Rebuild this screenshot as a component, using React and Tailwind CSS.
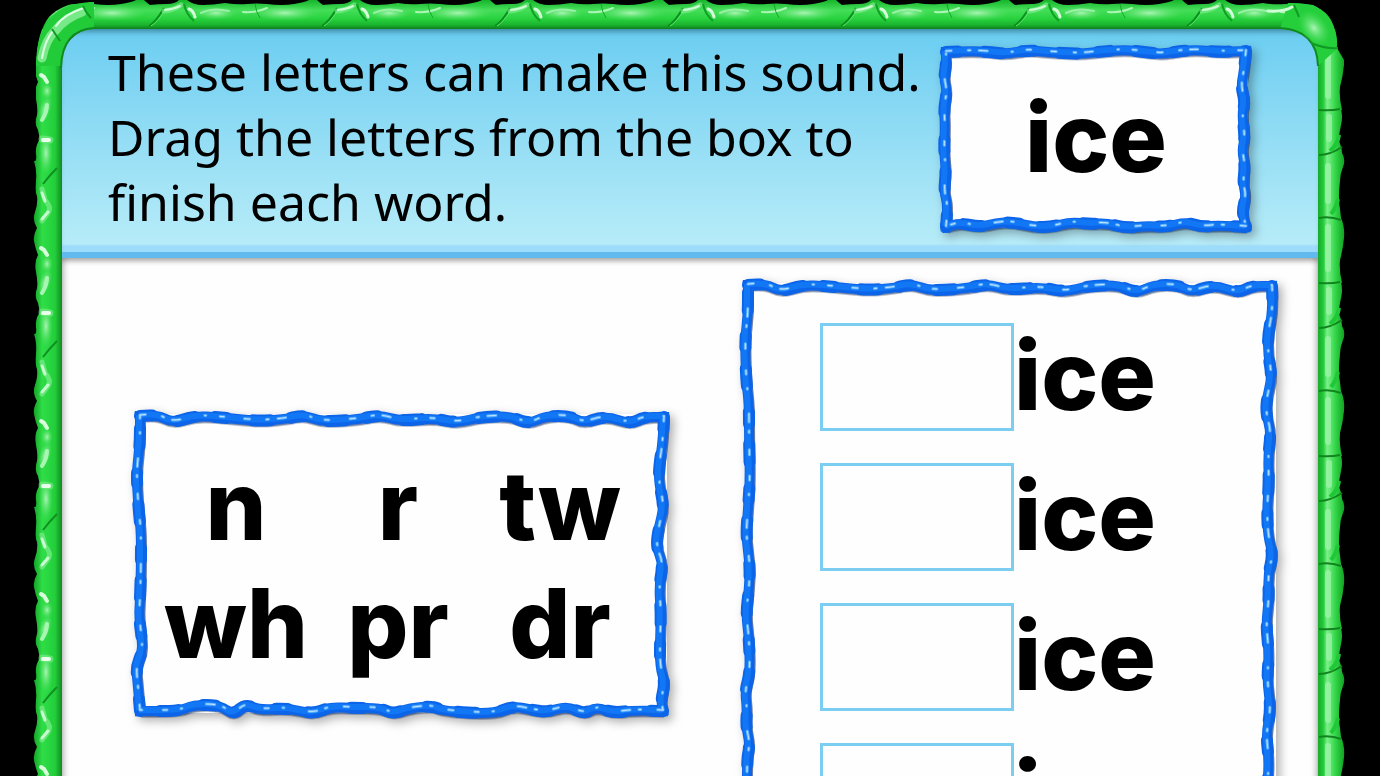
import { useState } from 'react';

const LETTERS = ['n', 'r', 'tw', 'wh', 'pr', 'dr'];
const ROWS = [1, 2, 3, 4];

// Rope centre lines, listed edge by edge
const CARD_ROPE = {
  width: 312,
  height: 186,
  top: [[6, 6], [30, 5], [50, 6], [66, 8], [88, 4], [106, 6], [140, 8], [165, 5], [188, 4], [204, 6], [222, 8], [240, 5], [258, 4], [280, 6], [306, 5]],
  right: [[306, 5], [304, 25], [301, 40], [305, 56], [302, 68], [305, 92], [302, 104], [305, 120], [303, 138], [306, 150], [302, 166], [306, 181]],
  bottom: [[306, 181], [280, 179], [262, 181], [246, 176], [226, 181], [206, 180], [186, 182], [166, 177], [150, 178], [130, 176], [112, 181], [94, 181], [72, 176], [56, 177], [40, 181], [20, 177], [6, 181]],
  left: [[6, 181], [8, 160], [4, 146], [6, 125], [4, 105], [5, 80], [4, 62], [7, 46], [4, 32], [6, 20], [6, 6]],
};

const LONG_TOP = [[6, 6], [22, 4], [39, 13], [60, 6], [83, 7], [103, 9], [126, 11], [152, 9], [169, 5], [186, 11], [203, 11], [226, 9], [246, 5], [266, 11], [299, 8], [323, 13], [346, 7], [376, 6], [394, 14], [412, 6], [436, 6], [449, 13], [472, 6], [496, 14], [510, 7], [530, 7]];

const LETTERS_ROPE = {
  width: 537,
  height: 307,
  top: LONG_TOP,
  right: [[530, 7], [529, 30], [525, 57], [525, 73], [530, 97], [525, 116], [522, 137], [529, 153], [525, 177], [527, 203], [526, 230], [526, 257], [531, 273], [527, 290], [529, 301]],
  bottom: [[529, 301], [500, 300], [480, 303], [462, 297], [450, 304], [433, 296], [413, 302], [399, 300], [379, 296], [359, 304], [309, 301], [299, 296], [276, 298], [259, 304], [246, 298], [219, 298], [196, 297], [179, 304], [153, 298], [126, 300], [111, 294], [99, 305], [86, 295], [59, 295], [46, 301], [6, 301]],
  left: [[6, 301], [4, 277], [2, 257], [8, 243], [8, 230], [5, 207], [6, 190], [7, 157], [7, 123], [5, 103], [3, 77], [3, 57], [6, 33], [6, 6]],
};

const WORDS_ROPE = {
  width: 538,
  height: 600,
  top: LONG_TOP,
  right: [[530, 7], [531, 30], [526, 55], [526, 75], [530, 98], [525, 118], [524, 135], [529, 153], [526, 178], [527, 203], [525, 230], [526, 257], [531, 276], [526, 296], [527, 320], [524, 345], [527, 375], [525, 402], [529, 430], [524, 455], [527, 482], [525, 512], [527, 600]],
  bottom: [],
  left: [[5, 600], [4, 485], [8, 466], [4, 448], [5, 430], [3, 412], [8, 394], [7, 360], [4, 335], [7, 310], [8, 287], [4, 257], [6, 230], [8, 200], [7, 160], [7, 125], [4, 100], [3, 60], [6, 35], [6, 6]],
};

const smooth = (points) => {
  if (points.length === 0) return '';
  let d = `M${points[0][0]} ${points[0][1]}`;
  for (let i = 1; i < points.length - 1; i++) {
    const [x, y] = points[i];
    const [nx, ny] = points[i + 1];
    d += ` Q${x} ${y} ${(x + nx) / 2} ${(y + ny) / 2}`;
  }
  const last = points[points.length - 1];
  return `${d} L${last[0]} ${last[1]}`;
};

const RopeBorder = ({ rope }) => {
  const edges = [rope.top, rope.right, rope.bottom, rope.left].map(smooth).join(' ');
  return (
    <svg
      className="pointer-events-none absolute inset-0 h-full w-full overflow-visible"
      viewBox={`0 0 ${rope.width} ${rope.height}`}
      preserveAspectRatio="none"
      fill="none"
      aria-hidden="true"
    >
      <path d={edges} stroke="#1b2f58" strokeOpacity="0.3" strokeWidth="10" transform="translate(1 2)" />
      <path d={edges} stroke="#1d3f85" strokeOpacity="0.5" strokeWidth="10" transform="translate(1 1)" />
      <path d={edges} stroke="#0c64e8" strokeWidth="10" strokeLinecap="square" />
      <path d={edges} stroke="#0c64e8" strokeWidth="12" strokeLinecap="round" strokeDasharray="12 26 18 20" />
      <path d={edges} stroke="#1277f5" strokeWidth="6" transform="translate(-1 -1)" />
      <path d={edges} stroke="#5db0ff" strokeWidth="3" strokeLinecap="round" strokeDasharray="5 17 2 9 8 25 1 14 4 21" transform="translate(0 -1)" />
      <path d={edges} stroke="#c4e6ff" strokeWidth="1" strokeLinecap="round" strokeDasharray="5 17 2 9 8 25 1 14 4 21" transform="translate(0 -1)" />
    </svg>
  );
};

const Panel = ({ rope, className, children }) => (
  <section className={`relative bg-[#fefefe] bg-clip-content p-1 drop-shadow-[4px_4px_5px_rgba(0,0,0,0.3)] ${className}`}>
    {children}
    <RopeBorder rope={rope} />
  </section>
);

// Bamboo frame round the whole board, built from repeated segments
const VineFrame = () => (
  <svg
    className="pointer-events-none absolute inset-0 h-full w-full"
    viewBox="0 0 1380 776"
    preserveAspectRatio="none"
    fill="none"
    aria-hidden="true"
  >
    <defs>
      <linearGradient id="vine-left" x1="0" x2="1" y1="0" y2="0">
        <stop offset="0" stopColor="#14a528" />
        <stop offset="0.3" stopColor="#2fdd47" />
        <stop offset="0.75" stopColor="#22cf3a" />
        <stop offset="1" stopColor="#128a20" />
      </linearGradient>
      <linearGradient id="vine-right" x1="0" x2="1" y1="0" y2="0">
        <stop offset="0" stopColor="#18a92b" />
        <stop offset="0.2" stopColor="#22cb39" />
        <stop offset="0.35" stopColor="#7ef08c" />
        <stop offset="0.65" stopColor="#35d74a" />
        <stop offset="1" stopColor="#0fa322" />
      </linearGradient>
      <linearGradient id="vine-top" x1="0" x2="0" y1="0" y2="1">
        <stop offset="0" stopColor="#16b52b" />
        <stop offset="0.35" stopColor="#45de59" />
        <stop offset="0.65" stopColor="#27d23e" />
        <stop offset="0.85" stopColor="#1bb52f" />
        <stop offset="1" stopColor="#0e7f1c" />
      </linearGradient>
      <radialGradient id="vine-shine">
        <stop offset="0" stopColor="#a9f5b3" />
        <stop offset="1" stopColor="#4ee261" stopOpacity="0" />
      </radialGradient>
      <g id="vine-top-part">
        <path
          d="M0 29V5Q10 4 18 4T30 0H38Q44 5 54 5T76 3Q88 5 98 4T118 4Q133 6 145 4T160 0H168Q171 3 174 5V29Z"
          fill="url(#vine-top)"
        />
        <path d="M0 26Q7 22 15 8" stroke="#0b8f1d" strokeWidth="2" />
        <path d="M2 26Q9 22 17 8" stroke="#58e66c" strokeWidth="1" />
        <ellipse cx="136" cy="13" rx="34" ry="8" fill="url(#vine-shine)" />
        <ellipse cx="67" cy="13" rx="22" ry="7" fill="url(#vine-shine)" />
        <path d="M15 11Q25 10 32 5" stroke="#86f094" strokeWidth="5" strokeLinecap="round" strokeOpacity="0.6" />
        <path d="M16 10Q25 9 31 6" stroke="#ccfad2" strokeWidth="2" strokeLinecap="round" />
        <path d="M35 4Q37 14 45 21" stroke="#129f25" strokeWidth="2" />
        <path d="M40 9Q44 10 46 17" stroke="#d5fdda" strokeWidth="3" strokeLinecap="round" />
        <path d="M52 13Q64 7 80 11" stroke="#b4f7bd" strokeOpacity="0.7" strokeWidth="2" strokeLinecap="round" />
        <path d="M94 12Q107 13 118 8" stroke="#c6fbcd" strokeOpacity="0.8" strokeWidth="2" strokeLinecap="round" />
        <path d="M106 4Q107 12 111 18" stroke="#15a829" strokeWidth="1" />
      </g>
      <g id="vine-left-part">
        <path
          d="M62 0H40Q35 7 36 15T34 22Q37 31 36 42T37 57Q38 65 35 73T37 89Q33 96 34 102T38 116Q34 123 36 133T37 149Q34 158 38 164L40 174H62Z"
          fill="url(#vine-left)"
        />
        <ellipse cx="46" cy="14" rx="7" ry="22" fill="url(#vine-shine)" />
        <path d="M42 0L50 1" stroke="#7cee8b" strokeWidth="7" strokeLinecap="round" strokeOpacity="0.6" />
        <path d="M43 1H49" stroke="#e9ffeb" strokeWidth="4" strokeLinecap="round" />
        <path d="M43 45Q49 37 57 29" stroke="#118f22" strokeWidth="2" />
        <path d="M42 50L45 61Q52 68 48 74L42 82" stroke="#7bed8a" strokeWidth="5" strokeLinecap="round" strokeOpacity="0.7" />
        <path d="M42 54L45 62M48 73L42 80" stroke="#c9fbd0" strokeWidth="3" strokeLinecap="round" />
        <path d="M41 109L44 111L47 116" stroke="#d8fedc" strokeWidth="4" strokeLinecap="round" />
        <ellipse cx="45" cy="143" rx="6" ry="15" fill="url(#vine-shine)" transform="rotate(18 45 143)" />
        <path d="M47 139Q47 146 42 154" stroke="#a9f5b3" strokeWidth="4" strokeLinecap="round" />
        <ellipse cx="47" cy="125" rx="6" ry="9" fill="url(#vine-shine)" />
      </g>
      <g id="vine-right-part">
        <path
          d="M1318 0H1341Q1343 8 1341 16T1339 32Q1342 39 1342 44Q1346 51 1343 58T1340 72Q1338 90 1340 100L1341 109Q1345 118 1344 129T1340 151Q1339 162 1342 174H1318Z"
          fill="url(#vine-right)"
        />
        <path d="M1319 1Q1331 2 1340 0M1319 46Q1330 46 1342 38M1319 109Q1330 107 1341 111" stroke="#12841f" strokeWidth="2" />
        <path d="M1329 8V30M1328 57V92M1328 118V160" stroke="#a2f4ad" strokeOpacity="0.7" strokeWidth="6" strokeLinecap="round" />
        <path d="M1330 42Q1338 35 1339 26M1331 105Q1336 99 1338 90" stroke="#20c837" strokeWidth="4" />
      </g>
    </defs>

    <use href="#vine-left-part" y="-34" />
    <use href="#vine-left-part" y="139" />
    <use href="#vine-left-part" y="312" />
    <use href="#vine-left-part" y="485" />
    <use href="#vine-left-part" y="658" />
    <use href="#vine-right-part" y="-64" />
    <use href="#vine-right-part" y="109" />
    <use href="#vine-right-part" y="282" />
    <use href="#vine-right-part" y="455" />
    <use href="#vine-right-part" y="628" />
    <use href="#vine-top-part" x="-24" />
    <use href="#vine-top-part" x="149" />
    <use href="#vine-top-part" x="322" />
    <use href="#vine-top-part" x="495" />
    <use href="#vine-top-part" x="668" />
    <use href="#vine-top-part" x="841" />
    <use href="#vine-top-part" x="1014" />
    <use href="#vine-top-part" x="1187" />

    {/* corners */}
    <path d="M0 0H92Q62 3 49 17Q37 32 36 64V100H0ZM1380 0H1296Q1321 4 1331 21Q1338 32 1337 48L1344 60V100H1380Z" fill="#000" />
    <path d="M36 64Q37 34 49 19Q63 4 90 2H94V29Q62 31 61 66H36Z" fill="#22cc39" />
    <path d="M94 28Q62 30 61 68" stroke="#128a20" strokeWidth="2" />
    <path d="M42 58Q46 39 55 31Q65 18 82 12" stroke="#8ff09c" strokeOpacity="0.8" strokeWidth="9" strokeLinecap="round" />
    <path d="M42 58Q45 40 53 31M56 26Q64 14 84 8" stroke="#dcffe1" strokeWidth="2" strokeLinecap="round" />
    <path d="M52 29L60 41M83 6Q86 13 91 18" stroke="#129b24" strokeWidth="2" />
    <path d="M1288 3Q1321 2 1331 20Q1337 32 1337 49L1318 66Q1317 31 1280 29Z" fill="#24cf3b" />
    <path d="M1280 28Q1317 30 1318 66" stroke="#128a20" strokeWidth="2" />
    <ellipse cx="1314" cy="28" rx="13" ry="20" fill="url(#vine-shine)" transform="rotate(-38 1314 28)" />
    <path d="M1294 5L1299 17M1311 43Q1325 49 1338 48" stroke="#129b24" strokeWidth="2" />
    <path d="M1268 11Q1284 12 1292 7" stroke="#d0fcd6" strokeWidth="3" strokeLinecap="round" />
  </svg>
);

const WordRow = ({ number, value, onChange }) => (
  <li>
    <label className="flex h-[108px] items-center">
      <input
        type="text"
        value={value}
        onChange={(e) => onChange(e.target.value)}
        aria-label={`Beginning letters for word ${number}`}
        className="h-[108px] w-[194px] border-3 border-[#7bcdf2] bg-transparent text-center outline-none"
      />
      <span className="pb-1">ice</span>
    </label>
  </li>
);

const App = () => {
  const [answers, setAnswers] = useState({});

  return (
    <div className="relative h-screen overflow-hidden bg-black px-[61px] pt-7 font-['Inter',sans-serif] text-black">
      <main className="h-screen overflow-hidden rounded-t-[36px] bg-[#fefefe] shadow-[inset_0_0_8px_rgba(0,0,0,0.6)]">
        <header className="flex h-[230px] items-start justify-between border-b-6 border-[#62b9ed] bg-linear-to-b from-[#6acdf1] to-[#b9edf8] pr-[67px] pl-[47px] shadow-[inset_0_6px_6px_-3px_rgba(20,70,90,0.6),inset_0_-8px_2px_-1px_#9edcfb,0_3px_5px_rgba(0,0,0,0.35)]">
          <h1 className="pt-3 font-['Noto_Sans',sans-serif] text-[50px] leading-[65px] whitespace-nowrap">
            These letters can make this sound.
            <br />
            Drag the letters from the box to
            <br />
            finish each word.
          </h1>
          <Panel rope={CARD_ROPE} className="mt-[18px] flex h-[186px] w-[312px] shrink-0 items-center justify-center">
            <p className="pb-1 text-[96px] leading-none font-extrabold">ice</p>
          </Panel>
        </header>

        <div className="flex items-start justify-between pt-[21px] pr-[39px] pl-[73px]">
          <Panel rope={LETTERS_ROPE} className="mt-[131px] h-[307px] w-[537px] shrink-0">
            <div className="grid w-[520px] grid-cols-3 px-[17px] pt-8">
              {LETTERS.map((letters) => (
                <button
                  key={letters}
                  type="button"
                  draggable
                  className="h-[118px] cursor-grab text-[96px] leading-[118px] font-extrabold"
                >
                  {letters}
                </button>
              ))}
            </div>
          </Panel>

          <Panel rope={WORDS_ROPE} className="h-[600px] w-[538px] shrink-0">
            <ul className="flex flex-col gap-8 pt-10 pl-[74px] text-[96px] leading-none font-extrabold">
              {ROWS.map((row) => (
                <WordRow
                  key={row}
                  number={row}
                  value={answers[row] || ''}
                  onChange={(value) => setAnswers({ ...answers, [row]: value })}
                />
              ))}
            </ul>
          </Panel>
        </div>
      </main>
      <VineFrame />
    </div>
  );
};

export default App;
